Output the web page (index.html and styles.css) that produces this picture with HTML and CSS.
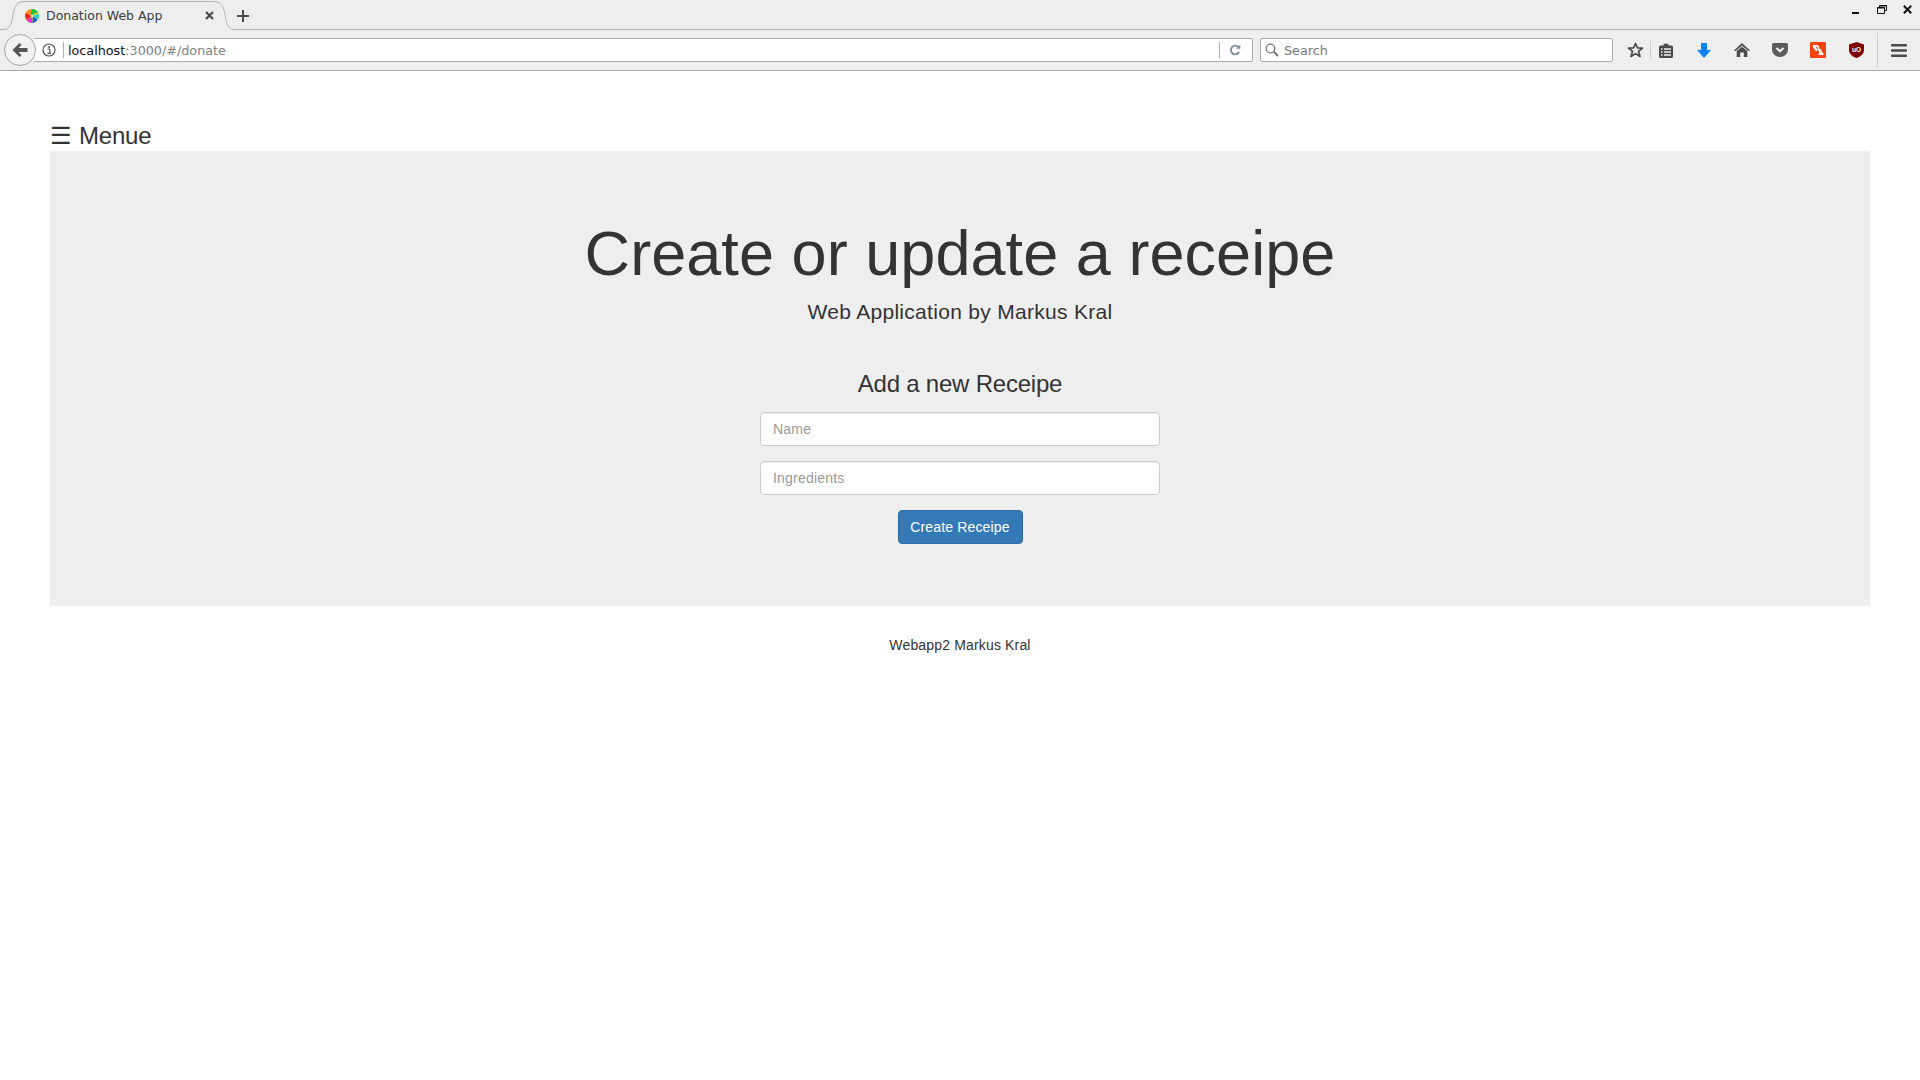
FILE: index.html
```html
<!DOCTYPE html>
<html lang="en">
<head>
<meta charset="utf-8">
<title>Donation Web App</title>
<link rel="stylesheet" href="styles.css">
</head>
<body>
<header class="chrome">
  <div class="tabbar">
    <div class="tab">
      <svg class="tab-shape" width="236" height="30" viewBox="0 0 236 30"><path d="M0 30V29.500H3C9 29.500 11 26 13 15C14.500 6 17 1.500 25 1.500H213C221 1.500 223.500 6 225 15C227 26 229 29.500 235 29.500H236V30Z" fill="#eee"/><path d="M0 29.500H3C9 29.500 11 26 13 15C14.500 6 17 1.500 25 1.500H213C221 1.500 223.500 6 225 15C227 26 229 29.500 235 29.500H236" fill="none" stroke="#b4b4b4"/></svg>
      <svg class="favicon" width="14" height="14" viewBox="0 0 14 14"><circle cx="7" cy="7" r="7" fill="#f5e020"/><path d="M7 7C5 5 5 2 7 0C10 0 12.500 1.500 13.400 4C11 3 9 4.500 7 7Z" fill="#20c040"/><path d="M7 7C9 6 12 6 13.400 4C14.300 6.500 14 9.500 12.500 10.800C11 8.500 9.500 7.500 7 7Z" fill="#20d0e0"/><path d="M7 7C9 8 11 9.500 12.500 10.800C11 13 8.500 14 7 14C8 11.500 8 9 7 7Z" fill="#2050f0"/><path d="M7 7C7 9 7.500 12 7 14C4.500 14 2.500 12.500 1.500 10.800C3.500 10.500 5.500 9 7 7Z" fill="#e030e0"/><path d="M7 7C5 8.500 3.500 10.500 1.500 10.800C.2 9 -.2 6 .6 4C3 4.500 5 6 7 7Z" fill="#f02020"/><path d="M7 7C4.500 6 3 4.500 .6 4C1.500 2 4 0 7 0C5.500 2 5.500 5 7 7Z" fill="#f59020"/><circle cx="7" cy="7" r="1.500" fill="#fff" opacity=".7"/></svg>
      <span class="tab-title">Donation Web App</span>
      <svg class="tab-close" width="9" height="9" viewBox="0 0 9 9"><path d="M1 1L8 8M8 1L1 8" stroke="#4a4a4a" stroke-width="2.200"/></svg>
    </div>
    <svg class="new-tab" width="12" height="12" viewBox="0 0 12 12"><path d="M6 0V12M0 6H12" stroke="#4a4a4a" stroke-width="2"/></svg>
    <div class="window-controls">
      <svg class="w-min" width="7" height="9" viewBox="0 0 7 9"><rect y="7" width="7" height="2" fill="#111"/></svg>
      <svg class="w-max" width="10" height="9" viewBox="0 0 10 9"><path d="M2.500 2.500V.5H9.500V5.500H7.500M.5 2.500H7.500V8.500H.5Z" fill="none" stroke="#111"/><path d="M.5 3H7.500M2.500 1H9.500" stroke="#111"/></svg>
      <svg class="w-close" width="9" height="9" viewBox="0 0 9 9"><path d="M.8 .8L8.200 8.200M8.200 .8L.8 8.200" stroke="#111" stroke-width="2"/></svg>
    </div>
  </div>
  <div class="navbar">
    <div class="back">
      <svg width="16" height="14" viewBox="0 0 16 14"><path d="M7.500 0L0.500 7L7.500 14L9.500 12L6.500 9H15.500V5H6.500L9.500 2Z" fill="#555"/></svg>
    </div>
    <div class="urlbar">
      <svg class="info" width="14" height="14" viewBox="0 0 14 14"><circle cx="7" cy="7" r="6" fill="none" stroke="#555" stroke-width="1.200"/><rect x="6.200" y="3.200" width="1.700" height="1.700" fill="#555"/><path d="M5.500 6H7.800V10H9M5.500 10.300H9" fill="none" stroke="#555" stroke-width="1.200"/></svg>
      <span class="sep"></span>
      <span class="url"><span class="host">localhost</span>:3000/#/donate</span>
      <span class="sep sep-end"></span>
      <svg class="reload" width="12" height="12" viewBox="0 0 12 12"><path d="M9.500 3.200A4.300 4.300 0 1 0 10 8" fill="none" stroke="#7d8a99" stroke-width="1.800"/><path d="M7 4.800H11.300V.8Z" fill="#7d8a99"/></svg>
    </div>
    <div class="searchbar">
      <svg width="14" height="14" viewBox="0 0 14 14"><circle cx="5.500" cy="5.500" r="4.300" fill="none" stroke="#777" stroke-width="1.300"/><path d="M8.800 8.800L13 13" stroke="#777" stroke-width="2"/></svg>
      <span>Search</span>
    </div>
    <div class="tools">
      <svg class="t-star" width="17" height="16" viewBox="0 0 17 16"><path d="M8.500 1.500L10.500 6H15.500L11.500 9.300L13 14.500L8.500 11.600L4 14.500L5.500 9.300L1.500 6H6.500Z" fill="none" stroke="#4a4a4a" stroke-width="1.700" stroke-linejoin="round"/></svg>
      <span class="t-div"></span>
      <svg class="t-list" width="14" height="15" viewBox="0 0 14 15"><path d="M1.500 2.500H4.500V1.500Q7 -.5 9.500 1.500V2.500H12.500Q14 2.500 14 4V13.500Q14 15 12.500 15H1.500Q0 15 0 13.500V4Q0 2.500 1.500 2.500Z" fill="#4a4a4a"/><path d="M2 6H3.500M5 6H12M2 9H3.500M5 9H12M2 12H3.500M5 12H12" stroke="#efefef" stroke-width="1.300"/></svg>
      <svg class="t-down" width="14" height="15" viewBox="0 0 14 15"><path d="M4 0H10V7H14L7 15L0 7H4Z" fill="#0a84f0"/></svg>
      <svg class="t-home" width="16" height="14" viewBox="0 0 16 14"><path d="M8 0L16 7.500L14.500 8L8 2.800L1.500 8L0 7.500Z" fill="#4a4a4a"/><path d="M2.700 8L8 3.800L13.300 8V14H9.800V9.500H6.200V14H2.700Z" fill="#4a4a4a"/></svg>
      <svg class="t-pocket" width="16" height="14" viewBox="0 0 16 14"><path d="M1.500 0H14.500Q16 0 16 1.500V6.500C16 11 12 14 8 14C4 14 0 11 0 6.500V1.500Q0 0 1.500 0Z" fill="#5c5c5c"/><path d="M4.500 5L8 8.300L11.500 5" fill="none" stroke="#efefef" stroke-width="2.200"/></svg>
      <svg class="t-code" width="16" height="16" viewBox="0 0 16 16"><rect width="16" height="16" rx="1" fill="#f8430e"/><path d="M3 3H8L6 5.500L7.800 8L6.200 9.200L3 5.500Z" fill="#fff"/><path d="M7.500 3.500L10.800 12.800" stroke="#fff" stroke-width="1.700"/><path d="M10.500 7L14 13H8.500V11.500H11.300L9.500 8Z" fill="#fff"/></svg>
      <span class="t-shield"><svg width="15" height="16" viewBox="0 0 15 16"><path d="M7.500 0L15 2.500V8C15 12 11 15 7.500 16C4 15 0 12 0 8V2.500Z" fill="#800000"/></svg><b>uO</b></span>
      <span class="t-div t-div-tall"></span>
      <svg class="t-menu" width="16" height="13" viewBox="0 0 16 13"><path d="M1 1.300H15M1 6.500H15M1 11.700H15" stroke="#4a4a4a" stroke-width="2.400" stroke-linecap="round"/></svg>
    </div>
  </div>
</header>
<main class="page">
  <div class="menu-row"><span class="menu-icon">☰</span> Menue</div>
  <section class="jumbotron">
    <h1>Create or update a receipe</h1>
    <p class="lead">Web Application by Markus Kral</p>
    <h3>Add a new Receipe</h3>
    <form class="form">
      <input class="field" type="text" placeholder="Name">
      <input class="field" type="text" placeholder="Ingredients">
      <button class="btn" type="button">Create Receipe</button>
    </form>
  </section>
  <footer class="foot">Webapp2 Markus Kral</footer>
</main>
</body>
</html>
```
FILE: styles.css
```css
* { box-sizing: border-box; }
html, body { margin: 0; padding: 0; background: #fff; }
body { height: 1080px; overflow: hidden; font-family: "Liberation Sans", Arial, sans-serif; color: #333; }

.chrome { background: #eee; font-family: "DejaVu Sans", sans-serif; border-bottom: 1px solid #a9a9a9; height: 71px; }
.tabbar { height: 30px; display: flex; align-items: flex-start; border-bottom: 1px solid #b4b4b4; }
.tab { position: relative; width: 236px; height: 30px; padding-top: 1px; display: flex; align-items: center; flex: none; }
.tab-shape { position: absolute; left: 0; top: 0; }
.favicon { position: relative; margin-left: 25px; flex: none; }
.tab-title { position: relative; margin-left: 7px; font-size: 12.500px; color: #3c3c3c; width: 156px; white-space: nowrap; }
.tab-close { position: relative; margin-left: 3px; }
.new-tab { margin: 10px 0 0 1px; }
.window-controls { margin: 5px 0 0 auto; display: flex; align-items: center; padding-right: 8px; height: 9px; }
.w-max { margin-left: 18px; }
.w-close { margin-left: 16px; }

.navbar { height: 40px; display: flex; align-items: center; padding-left: 4px; }
.back { width: 32px; height: 32px; border-radius: 50%; border: 1px solid #a6a6a6; background: #f2f2f2; display: flex; align-items: center; justify-content: center; position: relative; z-index: 1; flex: none; }
.urlbar { margin-left: -2px; width: 1219px; height: 24px; background: #fff; border: 1px solid #ababab; border-left: 0; border-radius: 0 2px 2px 0; display: flex; align-items: center; font-size: 12.750px; flex: none; }
.info { margin-left: 8px; flex: none; }
.sep { width: 1px; height: 16px; background: #b0b0b0; margin-left: 7px; flex: none; }
.url { margin-left: 4px; color: #808080; white-space: nowrap; flex: 1; }
.host { color: #111; }
.sep-end { margin-left: 0; }
.reload { margin: 0 11px 0 9px; flex: none; }
.searchbar { margin-left: 7px; width: 353px; height: 24px; background: #fff; border: 1px solid #ababab; border-radius: 2px; display: flex; align-items: center; gap: 5px; padding-left: 4px; font-size: 12.750px; color: #777; flex: none; }
.tools { flex: 1; display: flex; align-items: center; height: 40px; padding-left: 14px; }
.t-div { width: 1px; height: 18px; background: #ccc; margin-left: 6px; flex: none; }
.t-list { margin-left: 8px; }
.t-down { margin-left: 24px; }
.t-home { margin-left: 23px; }
.t-pocket { margin-left: 22px; }
.t-code { margin-left: 22px; }
.t-shield { margin-left: 23px; position: relative; width: 15px; height: 16px; display: block; }
.t-shield svg { display: block; }
.t-shield b { position: absolute; left: 0; right: 0; top: 4px; text-align: center; font: bold 6.500px/8px "Liberation Sans", sans-serif; color: #fff; }
.t-div-tall { height: 34px; margin-left: 13px; }
.t-menu { margin-left: 13px; }

.page { padding: 0 50px; }
.menu-row { height: 80px; padding-top: 50px; font-size: 24px; line-height: 30px; color: #333; white-space: nowrap; letter-spacing: -.2px; }
.menu-icon { font-size: 24px; letter-spacing: 0; margin-right: .5px; }
.jumbotron { background: #eee; height: 455px; padding-top: 68px; text-align: center; }
h1 { margin: 0; font-size: 63px; line-height: 69px; font-weight: 500; color: #333; letter-spacing: .05px; }
.lead { margin: 9px 0 0; font-size: 21px; line-height: 30px; font-weight: 400; color: #333; letter-spacing: .3px; }
h3 { margin: 44px 0 0; font-size: 24px; line-height: 26px; font-weight: 500; color: #333; letter-spacing: -.22px; }
.form { margin: 15px auto 0; width: 400px; display: flex; flex-direction: column; align-items: center; gap: 15px; }
.field { width: 400px; height: 34px; padding: 6px 12px; border: 1px solid #ccc; border-radius: 4px; background: #fff; font: 14px/20px "Liberation Sans", Arial, sans-serif; box-shadow: inset 0 1px 1px rgba(0,0,0,.075); color: #555; display: block; letter-spacing: .2px; }
.field::placeholder { color: #999; opacity: 1; }
.btn { width: 125px; height: 34px; padding: 6px 0; border: 1px solid #2e6da4; border-radius: 4px; background: #337ab7; color: #fff; font: 14px/20px "Liberation Sans", Arial, sans-serif; letter-spacing: .15px; }
.foot { margin-top: 29px; text-align: center; font-size: 14px; line-height: 20px; color: #333; letter-spacing: .16px; }
```
